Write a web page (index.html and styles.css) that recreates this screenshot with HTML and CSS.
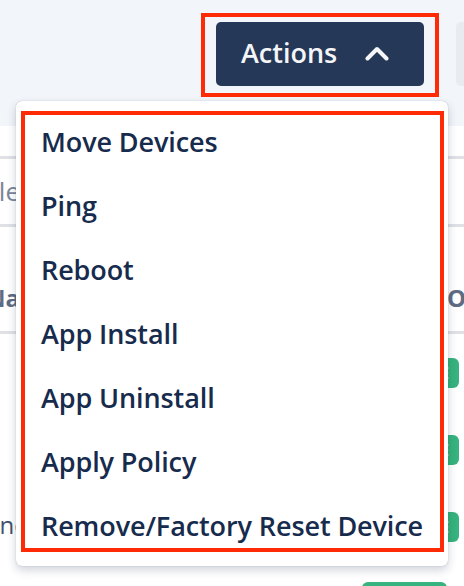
FILE: index.html
```html
<!DOCTYPE html>
<html lang="en">
<head>
<meta charset="utf-8">
<title>Devices – Actions</title>
<link rel="stylesheet" href="styles.css">
</head>
<body>
<div class="page">
  <header class="topbar">
    <div class="actions-wrap">
      <button class="actions-btn" type="button">
        <span class="actions-label">Actions</span>
        <svg class="chevron" width="24" height="15" viewBox="0 0 24 15" aria-hidden="true">
          <polyline points="2.5,12.5 12,3 21.5,12.5" fill="none" stroke="#f4f5f7" stroke-width="4" stroke-linecap="round" stroke-linejoin="round"/>
        </svg>
      </button>
      <div class="annot annot-btn"></div>
    </div>
    <div class="ghost-btn"></div>
  </header>

  <main class="content">
    <div class="filter"><span class="filter-text">Select devices</span></div>
    <div class="thead">
      <div class="th th-name">Name</div>
      <div class="th th-status">Offline</div>
    </div>
    <div class="trow">
      <div class="td-name">Tablet</div>
      <div class="td-status"><span class="badge">ONLINE</span></div>
    </div>
    <div class="trow">
      <div class="td-name">Kiosk</div>
      <div class="td-status"><span class="badge">ONLINE</span></div>
    </div>
    <div class="trow">
      <div class="td-name name-ne">Phone</div>
      <div class="td-status"><span class="badge">ONLINE</span></div>
    </div>
    <div class="tfoot">
      <div class="green-btn"></div>
    </div>
  </main>

  <div class="menu">
    <ul class="menu-list">
      <li class="menu-item">Move Devices</li>
      <li class="menu-item">Ping</li>
      <li class="menu-item">Reboot</li>
      <li class="menu-item">App Install</li>
      <li class="menu-item">App Uninstall</li>
      <li class="menu-item">Apply Policy</li>
      <li class="menu-item">Remove/Factory Reset Device</li>
    </ul>
    <div class="annot annot-menu"></div>
  </div>
</div>
</body>
</html>
```

FILE: styles.css
```css
html, body {
  margin: 0;
  padding: 0;
  width: 464px;
  height: 586px;
  overflow: hidden;
  background: #ffffff;
  font-family: "Open Sans", "Noto Sans", sans-serif;
}

.page {
  position: relative;
  width: 464px;
  height: 586px;
  overflow: hidden;
}

.topbar {
  height: 126px;
  box-sizing: border-box;
  background: #f2f5f9;
  display: flex;
  align-items: flex-start;
  gap: 32px;
  padding: 22px 0 0 216px;
}

.actions-wrap {
  position: relative;
  flex: none;
}

.actions-btn {
  width: 208px;
  height: 64px;
  box-sizing: border-box;
  border: none;
  border-radius: 5px;
  background: #253858;
  color: #f4f5f7;
  display: flex;
  align-items: center;
  padding: 0 0 0 25px;
  font-family: "Open Sans", "Noto Sans", sans-serif;
  font-weight: 600;
  font-size: 27px;
  cursor: pointer;
}

.actions-label {
  display: block;
  line-height: 34px;
  margin-top: -3px;
}

.chevron {
  display: block;
  margin-left: 28px;
  margin-top: -2px;
}

.ghost-btn {
  flex: none;
  width: 60px;
  height: 64px;
  border-radius: 5px;
  background: #e8ebf0;
}

.annot {
  position: absolute;
  box-sizing: border-box;
  border: 4px solid #ff2b06;
  pointer-events: none;
}

.annot-btn {
  left: -15px;
  top: -9px;
  width: 238px;
  height: 84px;
}

.content {
  display: block;
}

.filter {
  margin-top: 30px;
  height: 71px;
  box-sizing: border-box;
  border-top: 3px solid #dfe1e6;
  border-bottom: 3px solid #dfe1e6;
  font-size: 26px;
  line-height: 65px;
  color: #7a869a;
  white-space: nowrap;
  overflow: hidden;
}

.filter-text {
  display: inline-block;
  margin-left: -30px;
}

.thead {
  display: grid;
  grid-template-columns: 447px 1fr;
  height: 107px;
  box-sizing: border-box;
  padding-top: 55px;
  border-bottom: 3px solid #dfe1e6;
  font-size: 24px;
  font-weight: 700;
  line-height: 32px;
  color: #5e6c84;
  white-space: nowrap;
}

.th-name {
  margin-left: -14px;
}

.th-status {
  overflow: hidden;
}

.trow {
  display: flex;
  align-items: center;
  justify-content: space-between;
  height: 77px;
}

.td-name {
  font-size: 24px;
  color: #42526e;
  margin-left: -44px;
  margin-top: -5px;
  visibility: hidden;
}

.td-name.name-ne {
  visibility: visible;
}

.td-status {
  padding-right: 5px;
}

.badge {
  display: inline-block;
  height: 30px;
  line-height: 30px;
  padding: 0 10px;
  border-radius: 6px;
  background: #36b37e;
  color: #ffffff;
  font-size: 16px;
  font-weight: 700;
}

.tfoot {
  display: flex;
  justify-content: flex-end;
  padding: 17px 17px 0 0;
}

.green-btn {
  width: 85px;
  height: 40px;
  border-radius: 6px;
  background: #36b37e;
}

.menu {
  position: absolute;
  left: 16px;
  top: 101px;
  width: 432px;
  box-sizing: border-box;
  padding: 9px 0 8px;
  background: #ffffff;
  border-radius: 6px;
  box-shadow: 0 4px 10px rgba(9, 30, 66, 0.2), 0 0 1px rgba(9, 30, 66, 0.35);
}

.menu-list {
  list-style: none;
  margin: 0;
  padding: 0;
}

.menu-item {
  height: 64px;
  line-height: 64px;
  padding: 0 0 0 25px;
  font-size: 27px;
  font-weight: 600;
  color: #172b4d;
  white-space: nowrap;
  letter-spacing: -0.1px;
}

.annot-menu {
  left: 5px;
  top: 10px;
  width: 423px;
  height: 441px;
}
```
